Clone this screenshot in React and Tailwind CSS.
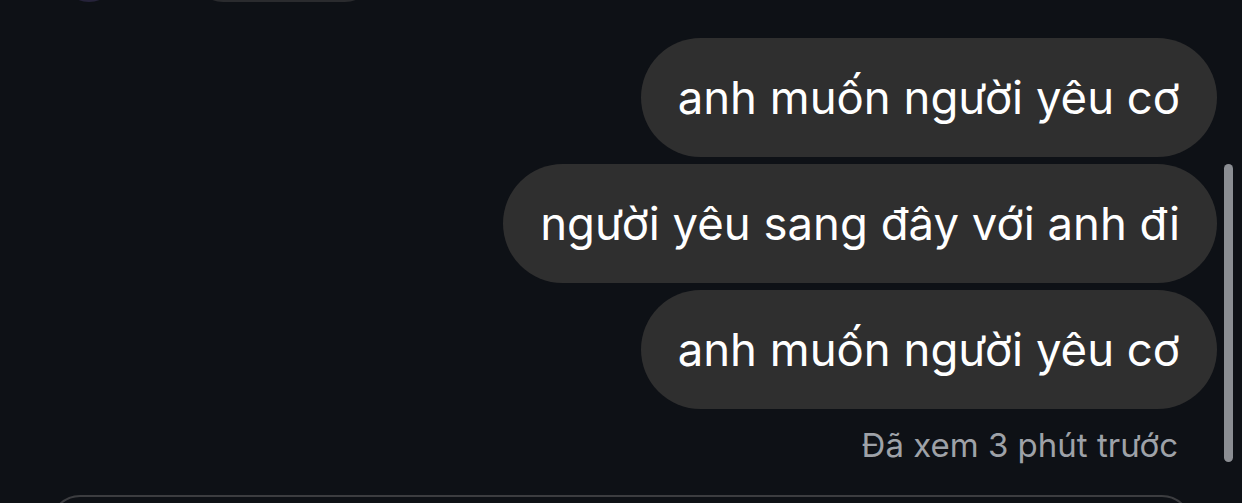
export default function App() {
  const mine = ['anh muốn người yêu cơ', 'người yêu sang đây với anh đi', 'anh muốn người yêu cơ'];

  return (
    <div className="relative h-[503px] w-[1242px] overflow-hidden bg-[#0e1116]" style={{ fontFamily: 'Inter, "Noto Sans", sans-serif' }}>
      {/* previous message from the other side, mostly scrolled away */}
      <div className="-mt-[58px] flex h-[60px] items-end">
        <div className="ml-[60px] h-[58px] w-[58px] rounded-full bg-[#26233a]" />
        <div className="ml-[75px] h-[60px] w-[182px] rounded-full bg-[#2a2b2e]" />
      </div>

      <div className="mt-[36px] flex flex-col items-end gap-[7px] pr-[25px]">
        {mine.map((t, i) => (
          <div key={i} className="flex h-[119px] items-center rounded-full bg-[#2f2f2f] px-[37px] text-[45.5px] leading-none text-white">
            {t}
          </div>
        ))}
      </div>

      <div className="mt-[17px] pr-[64px] text-right text-[33px] leading-[38px] text-[#9ea2a8]">
        Đã xem 3 phút trước
      </div>

      <div className="mx-[50px] mt-[31px] h-[60px] rounded-[44px] border-2 border-[#3c3d40] bg-[#0e1116]" />

      {/* scroll indicator */}
      <div className="absolute left-[1224px] top-[164px] h-[298px] w-[9px] rounded-full bg-[#8b8e93]" />
    </div>
  );
}
